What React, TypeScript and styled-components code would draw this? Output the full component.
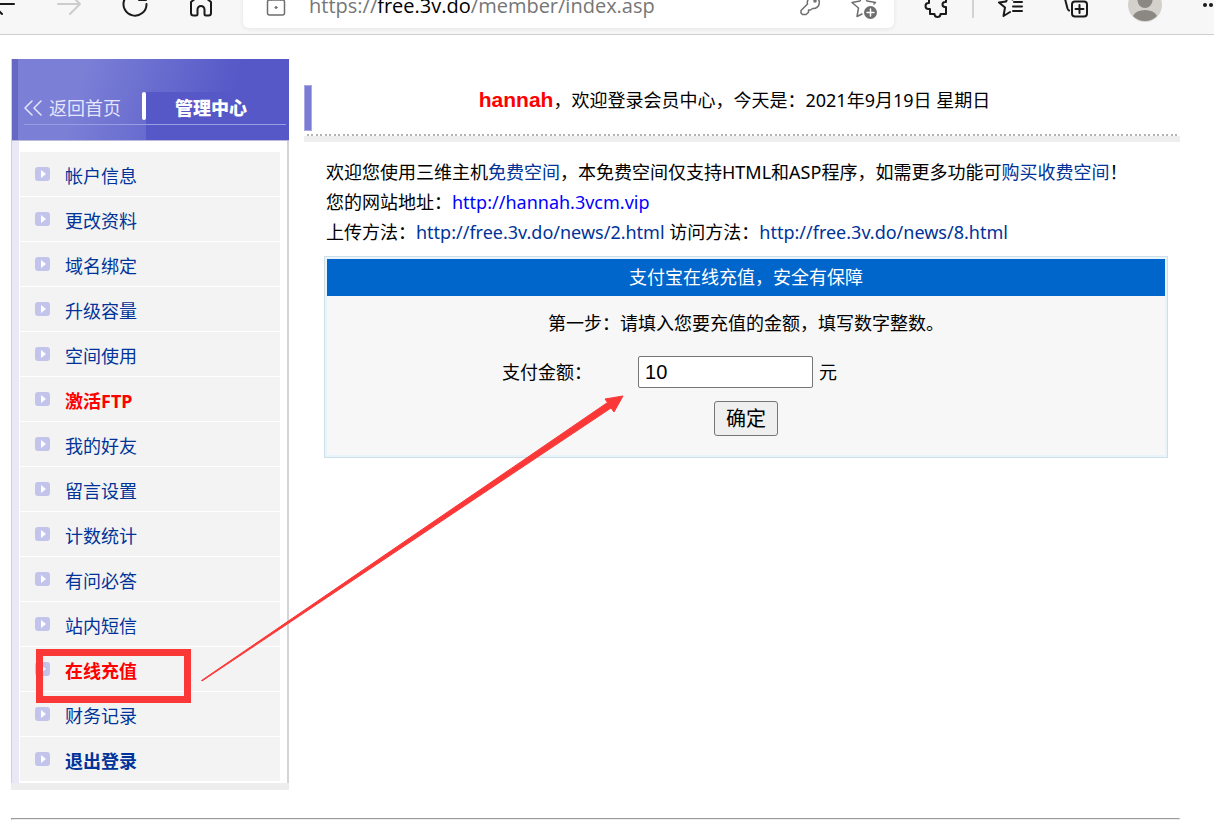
import React from 'react';
import styled, { createGlobalStyle } from 'styled-components';

const GlobalStyle = createGlobalStyle`
  *, *::before, *::after { box-sizing: border-box; }
  body {
    margin: 0;
    background: #fff;
    color: #000;
    font-family: "Noto Sans", "Noto Sans CJK SC", sans-serif;
    font-size: 18px;
    line-height: 30px;
  }
  a { color: #039; text-decoration: none; }
  button, input { font: inherit; }
`;

/* ---------- browser chrome ---------- */

const Chrome = styled.header`
  display: flex;
  align-items: flex-end;
  height: 35px;
  overflow: hidden;
  background: #f7f7f7;
  border-bottom: 1px solid #cfcfcf;
`;

const ChromeRow = styled.div`
  flex: 1;
  display: flex;
  align-items: center;
  height: 44px;
  margin: 0 -27px 6px -30px;
`;

const ToolButton = styled.button<{ $width?: number }>`
  flex: none;
  display: flex;
  align-items: center;
  justify-content: center;
  width: ${(p) => p.$width ?? 66}px;
  height: 44px;
  padding: 0;
  border: 0;
  background: none;
  color: #1a1a1a;

  &:disabled { color: #cdcdcd; }
`;

const AddressBar = styled.div`
  flex: 1;
  min-width: 0;
  display: flex;
  align-items: center;
  height: 44px;
  margin: 0 9px;
  padding: 0 3px 0 20px;
  background: #fff;
  border-radius: 6px;
  box-shadow: 0 1px 5px rgba(0, 0, 0, 0.08);
  color: #767676;

  button { color: #6e6e6e; }
`;

const Url = styled.div`
  flex: 1;
  min-width: 0;
  margin-left: 20px;
  overflow: hidden;
  font-family: "Open Sans", "Noto Sans", sans-serif;
  font-size: 20px;
  white-space: nowrap;

  b { color: #000; font-weight: 400; }
`;

const Divider = styled.span`
  width: 2px;
  height: 24px;
  margin: 0 3px;
  background: #d2d2d2;
`;

const Icon = styled.svg<{ $thin?: boolean }>`
  display: block;
  fill: none;
  stroke: currentColor;
  stroke-width: ${(p) => (p.$thin ? 1.5 : 2)};
  stroke-linecap: round;
  stroke-linejoin: round;
`;

/* ---------- page ---------- */

const Page = styled.div`
  position: relative;
  padding: 24px 34px 15px 11px;
`;

const Columns = styled.div`
  display: flex;
  align-items: flex-start;
  gap: 15px;
`;

const Sidebar = styled.aside`
  flex: none;
  width: 278px;
  border-bottom: 7px solid #ededed;
`;

const SidebarHead = styled.div`
  display: flex;
  align-items: flex-end;
  height: 82px;
  border-left: 1px solid #d0d0d8;
  border-bottom: 1px solid #b9b9dc;
  background:
    linear-gradient(90deg, rgba(60, 60, 160, 0.35) 0 6px, transparent 6px),
    linear-gradient(105deg, #7b7fd6 25%, #5558c6 78%);
`;

const HeadTab = styled.a<{ $active?: boolean }>`
  position: relative;
  flex: ${(p) => (p.$active ? '1' : 'none')};
  width: ${(p) => (p.$active ? 'auto' : '134px')};
  height: 48px;
  padding-top: 1px;
  padding-left: ${(p) => (p.$active ? 29 : 11)}px;
  background: ${(p) => (p.$active ? '#5558c6' : 'transparent')};
  color: ${(p) => (p.$active ? '#fff' : '#e6e6fa')};
  font-weight: ${(p) => (p.$active ? 900 : 400)};
  white-space: nowrap;
  display: flex;
  align-items: flex-start;
  gap: 6px;

  &::after {
    content: '';
    position: absolute;
    top: 32px;
    left: ${(p) => (p.$active ? 0 : 12)}px;
    right: ${(p) => (p.$active ? 3 : 0)}px;
    height: 1px;
    background: #9a9ce4;
  }
  svg { margin-top: 7px; }
`;

const HeadBar = styled.span`
  align-self: flex-start;
  width: 4px;
  height: 28px;
  margin: 33px 0 0 -4px;
  border-radius: 2px;
  background: #fff;
  z-index: 1;
`;

const MenuFrame = styled.nav`
  border-left: 1px solid #d2d2d2;
`;

const Menu = styled.ul`
  margin: 0;
  padding: 11px 7px 1px 1px;
  list-style: none;
  border-left: 7px solid #e8e8f7;
  border-right: 2px solid #d4d4d8;
`;

const MenuItem = styled.li`
  display: flex;
  align-items: center;
  gap: 15px;
  height: 45px;
  padding-left: 15px;
  background: #f3f3f3;
  border-bottom: 1px solid #fff;
`;

const MenuLink = styled.a<{ $tone?: 'red' | 'bold' }>`
  padding-top: 4px;
  color: ${(p) => (p.$tone === 'red' ? '#f00' : '#039')};
  font-weight: ${(p) => (p.$tone ? 700 : 400)};
`;

const Main = styled.main`
  flex: 1;
  min-width: 0;
`;

const Banner = styled.div`
  display: flex;
  align-items: flex-start;
  height: 83px;
  padding-top: 26px;
  border-bottom: 6px solid #eee;
  background: repeating-linear-gradient(
      90deg, #fff 0 3px, #b4b4b4 3px 5px, #fff 5px 7px, #b4b4b4 7px 9px
    ) 0 100% / 100% 2px no-repeat padding-box;

  &::before {
    content: '';
    width: 8px;
    height: 46px;
    background: #7b7dd5;
    border: 1px solid #a9aae4;
  }
  p {
    flex: 1;
    margin: 0 23px 0 0;
    text-align: center;
  }
  strong {
    color: #f00;
    font-family: "Liberation Sans", sans-serif;
    font-size: 21px;
  }
`;

const Intro = styled.div`
  padding: 15px 0 9px 22px;
  white-space: nowrap;

  p { margin: 0; }
`;

const SiteLink = styled.a`
  color: #00f;
`;

const Panel = styled.form`
  margin: 0 12px 0 20px;
  border: 1px solid #cfdfe6;
  padding: 2px;
  background: #e8f4fc;
`;

const PanelTitle = styled.h2`
  margin: 0;
  height: 37px;
  background: #06c;
  color: #fff;
  font-size: 18px;
  font-weight: 400;
  line-height: 37px;
  text-align: center;
`;

const PanelBody = styled.div`
  padding: 12px 0 19px;
  background: #f7f7f7;
  text-align: center;

  p { margin: 0; }
`;

const Field = styled.div`
  display: grid;
  grid-template-columns: 37% 1fr;
  align-items: center;
  column-gap: 1px;
  margin: 18px 0 13px;
  text-align: left;

  label {
    padding-right: 45px;
    text-align: right;
  }
  span {
    display: flex;
    align-items: center;
    gap: 6px;
  }
`;

const Amount = styled.input`
  width: 175px;
  height: 32px;
  padding: 0 6px;
  border: 1px solid #767676;
  border-radius: 2px;
  background: #fff;
  color: #000;
  font-family: "Liberation Sans", sans-serif;
  font-size: 20px;
`;

const Submit = styled.button`
  height: 35px;
  padding: 0 11px;
  border: 1px solid #767676;
  border-radius: 3px;
  background: #efefef;
  color: #000;
  font-size: 20px;
  line-height: 30px;
  vertical-align: top;
`;

const Rule = styled.hr`
  margin: 28px 0 0;
  border: 1px solid;
  border-color: #999 #eee #eee #999;
`;

const Annotation = styled.svg`
  position: absolute;
  top: 24px;
  left: 11px;
  pointer-events: none;
`;

const items: { text: string; tone?: 'red' | 'bold' }[] = [
  { text: '帐户信息' },
  { text: '更改资料' },
  { text: '域名绑定' },
  { text: '升级容量' },
  { text: '空间使用' },
  { text: '激活FTP', tone: 'red' },
  { text: '我的好友' },
  { text: '留言设置' },
  { text: '计数统计' },
  { text: '有问必答' },
  { text: '站内短信' },
  { text: '在线充值', tone: 'red' },
  { text: '财务记录' },
  { text: '退出登录', tone: 'bold' },
];

const Bullet = () => (
  <svg width="15" height="14" viewBox="0 0 15 14" aria-hidden="true">
    <rect width="15" height="14" rx="3" fill="#c3c4ec" />
    <path d="M6 3v8l5-4z" fill="#fff" />
  </svg>
);

export default function App() {
  return (
    <div lang="zh-CN">
      <GlobalStyle />
      <Chrome>
        <ChromeRow>
          <ToolButton aria-label="Back">
            <Icon width="24" height="24" viewBox="0 0 24 24">
              <path d="M23 10H1M11 0L1 10l10 10" />
            </Icon>
          </ToolButton>
          <ToolButton aria-label="Forward" disabled>
            <Icon width="24" height="24" viewBox="0 0 24 24">
              <path d="M1 10h22M13 0l10 10-10 10" />
            </Icon>
          </ToolButton>
          <ToolButton aria-label="Refresh">
            <Icon width="26" height="26" viewBox="0 0 26 26">
              <path d="M24.500 11A11.500 11.500 0 1 1 20 2M24 0v7h-7" />
            </Icon>
          </ToolButton>
          <ToolButton aria-label="Home">
            <Icon width="24" height="26" viewBox="0 0 24 26">
              <path d="M2 9l10-8 10 8v11a2.500 2.500 0 0 1-2.500 2.500H17a1.500 1.500 0 0 1-1.500-1.500v-4.500a3.500 3.500 0 0 0-7 0V21A1.500 1.500 0 0 1 7 22.500H4.500A2.500 2.500 0 0 1 2 20z" />
            </Icon>
          </ToolButton>
          <AddressBar>
            <ToolButton $width={26} aria-label="Site information">
              <Icon $thin width="20" height="26" viewBox="0 0 20 26">
                <rect x="1.500" y="7" width="17" height="15" rx="2" />
                <path d="M5.500 7V4a4.500 4.500 0 0 1 9 0v3" />
                <circle cx="10" cy="14.500" r="1" fill="currentColor" strokeWidth="1" />
              </Icon>
            </ToolButton>
            <Url role="textbox" aria-readonly="true" aria-label="Address">
              https://<b>free.3v.do</b>/member/index.asp
            </Url>
            <ToolButton $width={54} aria-label="Password">
              <Icon $thin width="22" height="26" viewBox="0 0 22 26">
                <path d="M8.500 11a6 6 0 1 1 5 4.500L11.500 17H9.500v2.200L7 21.500H3.500L2 20v-2.500z" />
                <circle cx="16" cy="8" r="1" />
              </Icon>
            </ToolButton>
            <ToolButton $width={54} aria-label="Add to favourites">
              <Icon $thin width="28" height="28" viewBox="0 0 28 28">
                <path d="M12 22l-5 2.500L8.500 16 2 10.500 10 9l3.500-7L17 9l8.500 1.500L24 12" />
                <circle cx="20.500" cy="20.500" r="6.500" fill="currentColor" stroke="none" />
                <path d="M20.500 17v7M17 20.500h7" stroke="#fff" />
              </Icon>
            </ToolButton>
          </AddressBar>
          <ToolButton aria-label="Extensions">
            <Icon width="26" height="26" viewBox="0 0 26 26">
              <path d="M6 3h5a3 3 0 0 1 6 0h6v6h-1a2.500 2.500 0 0 0 0 5h1v7h-5.500a3 3 0 0 1-6 0H7v-5H5.500a3 3 0 0 1 0-6H6z" />
            </Icon>
          </ToolButton>
          <Divider />
          <ToolButton aria-label="Favourites">
            <Icon width="26" height="26" viewBox="0 0 26 26">
              <path d="M13 19l-6.500 4L8 14.500 2 9.500l7-1L12.500 1l3 5.500M17 9h8M16 13.500h9M16 18h9" />
            </Icon>
          </ToolButton>
          <ToolButton aria-label="Collections">
            <Icon width="26" height="26" viewBox="0 0 26 26">
              <rect x="9" y="8.500" width="15" height="15" rx="3" />
              <path d="M16.500 12v8M12.500 16h8M1.500 4L4.500 15.500q.5 1.500 1.500 2M1.500 4L15 1l1 3" />
            </Icon>
          </ToolButton>
          <ToolButton $width={72} aria-label="Profile">
            <svg width="34" height="36" viewBox="0 0 34 36">
              <circle cx="17" cy="17" r="17" fill="#d4d1cd" />
              <circle cx="17" cy="12.500" r="7.500" fill="#8b8783" />
              <path d="M5 28a12.500 8.500 0 0 1 24 0 17 17 0 0 1-24 0z" fill="#8b8783" />
            </svg>
          </ToolButton>
          <ToolButton $width={60} aria-label="Settings and more">
            <svg width="18" height="8" viewBox="0 0 18 8" fill="#1a1a1a">
              <circle cx="3" cy="3" r="2" />
              <circle cx="9" cy="3" r="2" />
              <circle cx="15" cy="3" r="2" />
            </svg>
          </ToolButton>
        </ChromeRow>
      </Chrome>

      <Page>
        <Columns>
          <Sidebar>
            <SidebarHead>
              <HeadTab href="#home">
                <Icon $thin width="20" height="16" viewBox="0 0 20 16">
                  <path d="M9 1L2 8l7 7M18 1l-7 7 7 7" />
                </Icon>
                返回首页
              </HeadTab>
              <HeadBar />
              <HeadTab href="#center" $active>管理中心</HeadTab>
            </SidebarHead>
            <MenuFrame>
              <Menu>
                {items.map((item) => (
                  <MenuItem key={item.text}>
                    <Bullet />
                    <MenuLink href="#menu" $tone={item.tone}>{item.text}</MenuLink>
                  </MenuItem>
                ))}
              </Menu>
            </MenuFrame>
          </Sidebar>

          <Main>
            <Banner>
              <p><strong>hannah</strong>，欢迎登录会员中心，今天是：2021年9月19日 星期日</p>
            </Banner>
            <Intro>
              <p>
                欢迎您使用三维主机<a href="#free">免费空间</a>，本免费空间仅支持HTML和ASP程序，如需更多功能可<a href="#buy">购买收费空间</a>！
              </p>
              <p>您的网站地址：<SiteLink href="#site">http://hannah.3vcm.vip</SiteLink></p>
              <p>
                上传方法：<a href="#upload">http://free.3v.do/news/2.html</a>{' '}
                访问方法：<a href="#visit">http://free.3v.do/news/8.html</a>
              </p>
            </Intro>
            <Panel onSubmit={(e) => e.preventDefault()}>
              <PanelTitle>支付宝在线充值，安全有保障</PanelTitle>
              <PanelBody>
                <p>第一步：请填入您要充值的金额，填写数字整数。</p>
                <Field>
                  <label htmlFor="amount">支付金额：</label>
                  <span>
                    <Amount id="amount" type="text" defaultValue="10" />
                    元
                  </span>
                </Field>
                <Submit type="submit">确定</Submit>
              </PanelBody>
            </Panel>
          </Main>
        </Columns>
        <Rule />
        <Annotation width="620" height="660" viewBox="11 59 620 660" aria-hidden="true">
          <rect x="39.500" y="652.500" width="148" height="47" fill="none" stroke="#fb3838" strokeWidth="7" />
          <path d="M201.500 680.500L607.500 402.500 605 399l18-3-9 16-3-4L202 681z" fill="#fb3838" stroke="#fb3838" strokeWidth="1" strokeLinejoin="round" />
        </Annotation>
      </Page>
    </div>
  );
}
